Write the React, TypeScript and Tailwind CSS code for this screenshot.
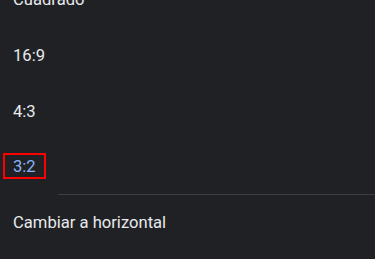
const rows = ["Cuadrado", "16:9", "4:3"];

export default function App() {
  return (
    <div className="h-[259px] w-[375px] overflow-hidden bg-[#202124] font-['Roboto',sans-serif] text-[16.6px] text-[#e8eaed]">
      <div className="-mt-[28px] flex flex-col">
        {rows.map((label) => (
          <div key={label} className="flex h-[56px] items-center px-[13px] leading-[56px]">
            {label}
          </div>
        ))}
        <div className="flex h-[54px] items-center px-[13px] leading-[54px] text-[#8ab4f8]">
          <span className="relative">
            3:2
            {/* highlight box */}
            <span className="absolute left-[-10px] right-[-10px] top-[13px] h-[26px] border-2 border-[#ff0000]" />
          </span>
        </div>
        <div className="ml-[58px] h-px bg-[#3c4043]" />
        <div className="flex h-[56px] items-center px-[13px] leading-[56px]">Cambiar a horizontal</div>
      </div>
    </div>
  );
}
